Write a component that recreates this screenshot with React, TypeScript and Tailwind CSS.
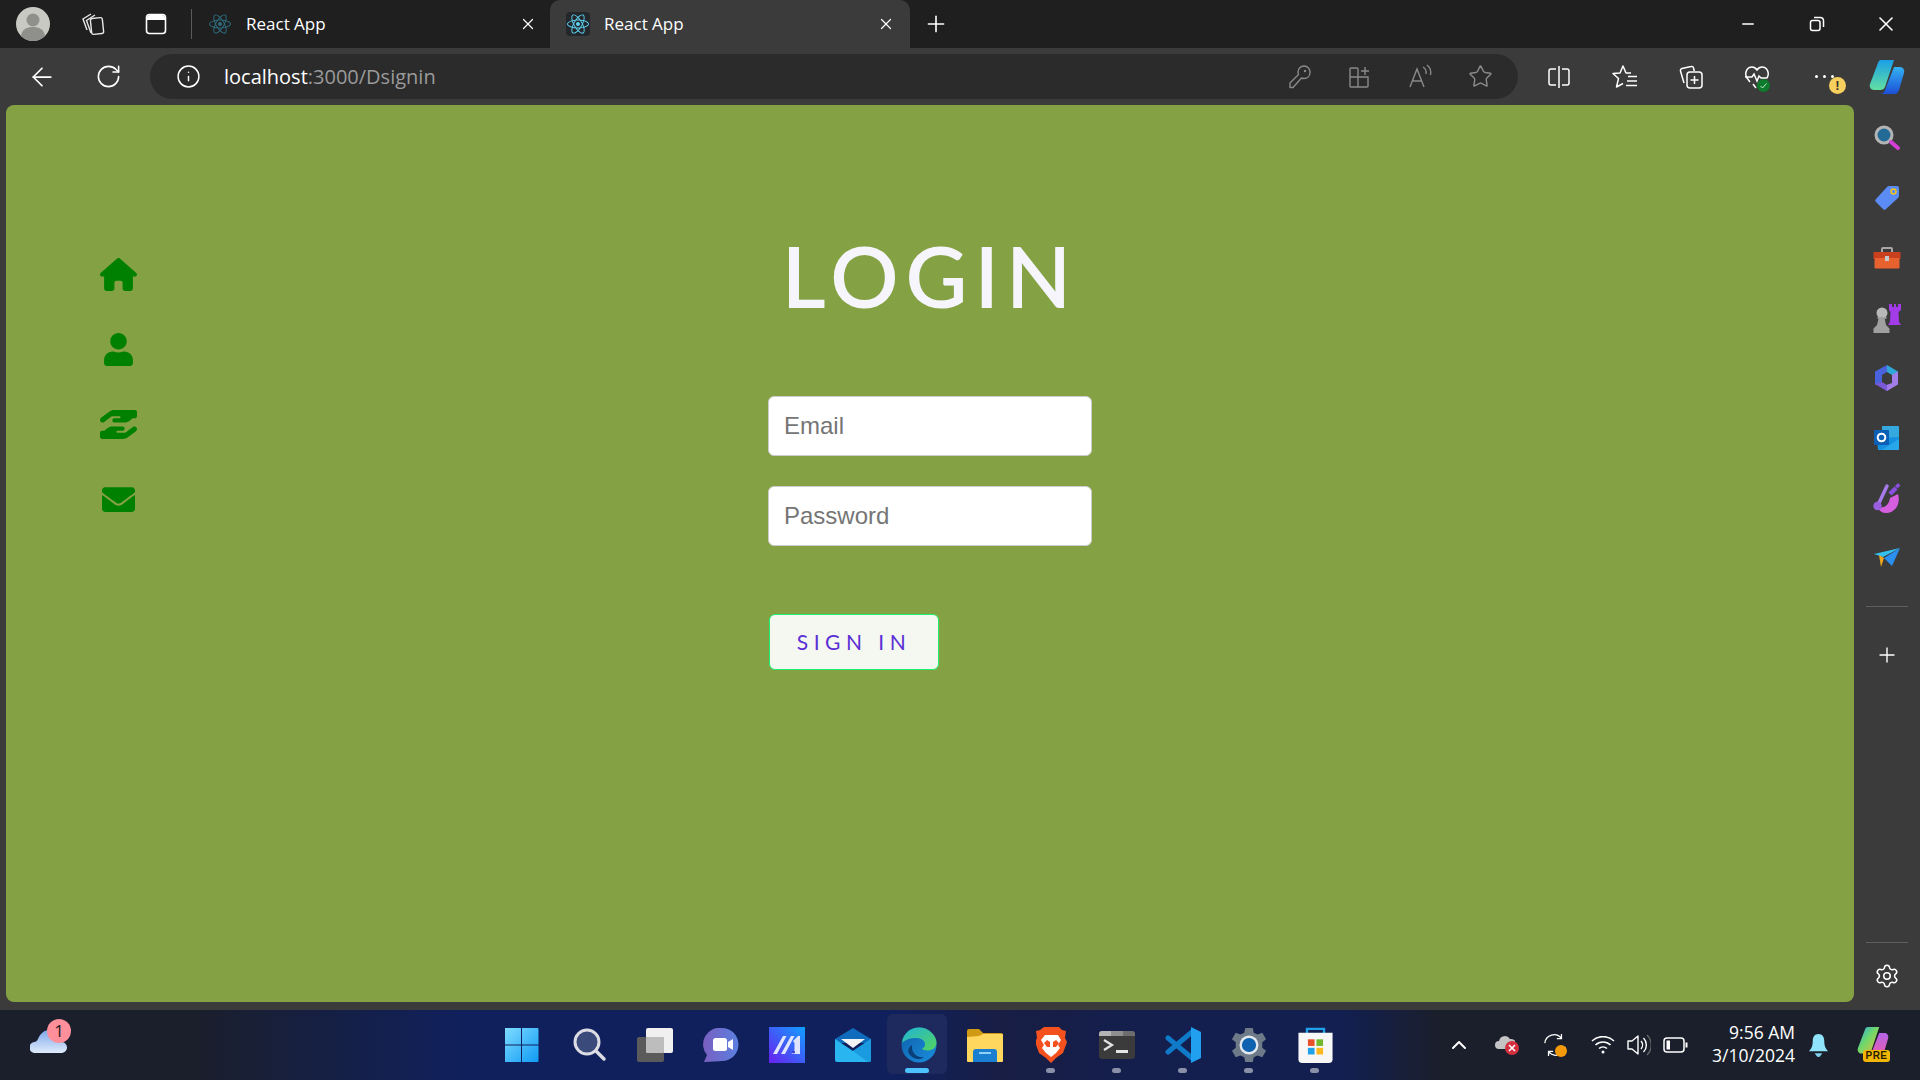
import React from "react";
import { ArrowLeft, RotateCw, Info, Star, Plus, X, Minus, Settings, ChevronUp } from "lucide-react";
import { FaReact, FaUser, FaEnvelope } from "react-icons/fa";
import { FaHouse, FaHandHoldingHand } from "react-icons/fa6";

const Restore = () => (
  <svg width="18" height="18" viewBox="0 0 18 18" fill="none" stroke="#fff" strokeWidth="1.5">
    <rect x="2.5" y="5.5" width="9.5" height="10" rx="2" />
    <path d="M6 2.5h6.5a3 3 0 0 1 3 3V12" />
  </svg>
);
const Collections = () => (
  <svg width="26" height="26" viewBox="0 0 26 26" fill="none" stroke="#e8e8e8" strokeWidth="1.4">
    <rect x="11" y="7" width="12" height="16" rx="2" transform="rotate(-6 17 15)" />
    <path d="M11 22 6.5 9.5 15 4M7 19 3 8l8-5" />
  </svg>
);
const TabsIcon = () => (
  <svg width="24" height="24" viewBox="0 0 24 24">
    <rect x="2.5" y="2.5" width="19" height="19" rx="3" fill="none" stroke="#fff" strokeWidth="1.6" />
    <path d="M3 6a3 3 0 0 1 3-3h12a3 3 0 0 1 3 3v2H3z" fill="#fff" />
  </svg>
);
const KeyIcon = () => (
  <svg width="24" height="26" viewBox="0 0 24 26" fill="none" stroke="#8a8a8a" strokeWidth="1.4">
    <path d="M16 2a6 6 0 0 1 6 6.500c0 3.500-2.500 6-6 6-1 0-1.800-.2-2.500-.5L5 23.500H2V19l8.500-8.500c-.3-.8-.5-1.600-.5-2.500A6 6 0 0 1 16 2z" strokeLinejoin="round" />
    <circle cx="17" cy="7" r="1.200" fill="#8a8a8a" stroke="none" />
  </svg>
);
const Apps = () => (
  <svg width="24" height="26" viewBox="0 0 24 26" fill="none" stroke="#8a8a8a" strokeWidth="1.4">
    <path d="M2 5a1 1 0 0 1 1-1h6a1 1 0 0 1 1 1v8H2zM2 13h8v10H3a1 1 0 0 1-1-1zM10 13h10v9a1 1 0 0 1-1 1h-9z" />
    <path d="M17 3v8M13 7h8" />
  </svg>
);
const ReadAloud = () => (
  <svg width="26" height="26" viewBox="0 0 26 26" fill="none" stroke="#8a8a8a" strokeWidth="1.4">
    <path d="M3 23 10 5l7 18M5.5 17h9" />
    <path d="M16 3c2.5 1.500 3.500 4 3 7M20 1c3 2.500 4.500 6 3.500 10" />
  </svg>
);
const Split = () => (
  <svg width="24" height="26" viewBox="0 0 24 26" fill="none" stroke="#fff" strokeWidth="1.5">
    <path d="M9 5H4a2 2 0 0 0-2 2v12a2 2 0 0 0 2 2h5M15 5h5a2 2 0 0 1 2 2v12a2 2 0 0 1-2 2h-5M12 2v22" />
  </svg>
);
const Favs = () => (
  <svg width="26" height="26" viewBox="0 0 26 26" fill="none" stroke="#fff" strokeWidth="1.5">
    <path d="M19 9h-5l-3-7-3 7-7 .5 5.500 5L4.500 23l6.500-3.500" strokeLinejoin="round" />
    <path d="M16 12.500h9M15 17h10M14 21.500h11" />
  </svg>
);
const CollectionsPlus = () => (
  <svg width="26" height="26" viewBox="0 0 26 26" fill="none" stroke="#fff" strokeWidth="1.5">
    <rect x="9" y="8" width="15" height="16" rx="3" />
    <path d="M16.500 12v8M12.500 16h8" />
    <path d="M6 19 2.500 7a2 2 0 0 1 1.500-2.500L13 2.500a2 2 0 0 1 2.500 1.500l.8 3" />
  </svg>
);
const Health = () => (
  <div className="relative w-[26px] h-[26px]">
    <svg width="26" height="26" viewBox="0 0 26 26" fill="none" stroke="#fff" strokeWidth="1.5">
      <path d="M6 18 3 14C0 9 3 3 8 3c2.500 0 4 1.500 5 3 1-1.500 2.500-3 5-3 5 0 8 6 5 11M1 13h7l2-3 3 7 2-5 2 2h6" />
      <path d="m9 20 3 4" />
    </svg>
    <svg width="13" height="13" viewBox="0 0 13 13" className="absolute right-[0px] bottom-[-2px]">
      <circle cx="6.500" cy="6.500" r="6.500" fill="#0e7a2c" />
      <path d="M3.500 7 5.500 9 9.500 4.500" fill="none" stroke="#bfe8c8" strokeWidth="1" />
    </svg>
  </div>
);
const More = () => (
  <div className="relative w-[26px] h-[26px] flex items-center">
    <div className="flex gap-[5px] ml-[5px]">
      <span className="w-[3px] h-[3px] rounded-full bg-white" />
      <span className="w-[3px] h-[3px] rounded-full bg-white" />
      <span className="w-[3px] h-[3px] rounded-full bg-white" />
    </div>
    <span className="absolute left-[19px] top-[13px] w-[17px] h-[17px] rounded-full bg-[#f7cf5f] text-[#33302a] text-[13px] leading-[17px] text-center font-bold font-['Liberation_Sans',sans-serif]">!</span>
  </div>
);
const Copilot = ({ size = 36 }: { size?: number }) => (
  <svg width={size} height={size} viewBox="0 0 36 36">
    <defs>
      <linearGradient id="cpa" x1="0" y1="0" x2="0" y2="1">
        <stop offset="0" stopColor="#1a9fe8" />
        <stop offset="1" stopColor="#62e0a0" />
      </linearGradient>
      <linearGradient id="cpb" x1="0" y1="0" x2="0" y2="1">
        <stop offset="0" stopColor="#33b2f2" />
        <stop offset="1" stopColor="#1c4fd8" />
      </linearGradient>
    </defs>
    <path d="M12 1h13l-9 27c-1 2-2 3-5 3H5c-3 0-5-3-4-6L9 4c.5-2 1.500-3 3-3z" fill="url(#cpa)" />
    <path d="M25 8h6c3 0 5 3 4 6l-5 17c-1 3-3 4-5 4H10c3 0 5-1 6-4z" fill="url(#cpb)" />
  </svg>
);
const CopilotPre = () => (
  <div className="relative w-[36px] h-[36px]">
    <svg width="36" height="32" viewBox="0 0 36 36">
      <defs>
        <linearGradient id="cpc" x1="0" y1="0" x2="1" y2="1">
          <stop offset="0" stopColor="#2aa5ee" />
          <stop offset=".45" stopColor="#6fd86a" />
          <stop offset="1" stopColor="#f0b93a" />
        </linearGradient>
        <linearGradient id="cpd" x1="0" y1="0" x2="0" y2="1">
          <stop offset="0" stopColor="#b265e8" />
          <stop offset="1" stopColor="#f05aa8" />
        </linearGradient>
      </defs>
      <path d="M12 1h13l-9 27c-1 2-2 3-5 3H5c-3 0-5-3-4-6L9 4c.5-2 1.500-3 3-3z" fill="url(#cpc)" />
      <path d="M25 8h6c3 0 5 3 4 6l-5 17c-1 3-3 4-5 4H10c3 0 5-1 6-4z" fill="url(#cpd)" />
    </svg>
    <span className="absolute left-[8px] top-[24px] w-[27px] h-[12px] rounded-[3px] bg-[#f2b705] text-[#2a2000] text-[10px] tracking-[0.5px] leading-[12px] text-center font-bold font-['Liberation_Sans',sans-serif]">PRE</span>
  </div>
);

/* Side rail */
const SMag = () => (
  <svg width="28" height="28" viewBox="0 0 28 28">
    <circle cx="11" cy="11" r="8" fill="#246a96" stroke="#b4b4b4" strokeWidth="3" />
    <path d="M18 18l7 6" stroke="#d63ed8" strokeWidth="4" strokeLinecap="round" />
  </svg>
);
const STag = () => (
  <svg width="26" height="26" viewBox="0 0 26 26">
    <path d="M15 1h8a2 2 0 0 1 2 2v8a3 3 0 0 1-1 2L12 24a2 2 0 0 1-3 0l-7-7a2 2 0 0 1 0-3L13 2a3 3 0 0 1 2-1z" fill="#5b8cf5" />
    <circle cx="19.500" cy="6.500" r="2.500" fill="none" stroke="#f5c518" strokeWidth="1.500" />
  </svg>
);
const SBox = () => (
  <svg width="28" height="22" viewBox="0 0 28 22">
    <path d="M9 5V2a1 1 0 0 1 1-1h8a1 1 0 0 1 1 1v3" fill="none" stroke="#a8a8a8" strokeWidth="2" />
    <rect x="0.500" y="5" width="27" height="7" fill="#c9401f" />
    <rect x="1.500" y="11" width="25" height="10.500" rx="1" fill="#e8622f" />
    <rect x="12" y="9" width="4" height="5" fill="#c8c8c8" />
  </svg>
);
const SChess = () => (
  <svg width="28" height="29" viewBox="0 0 28 29">
    <path d="M16 0h3v3h2V0h2v3h2V0h3v6l-2.500 2 .5 10 2 3H15l2-3 .5-10L16 6z" fill="#a33ce8" />
    <circle cx="9" cy="9" r="5.500" fill="#b8b8b8" />
    <path d="M4.500 13h9v1.800h-1.800L13 21l3.500 3.500V29H.5v-4.500L4 21l1.500-6.200h-1z" fill="#a0a0a0" />
  </svg>
);
const SHex = () => (
  <svg width="26" height="26" viewBox="0 0 26 26">
    <path d="M13 0 24 6.500V14l-6-4-5-3z" fill="#2fa8d8" />
    <path d="M1 6.500 13 0v7L8 10v7l-7 3z" fill="#4a62dc" />
    <path d="M24 6.500V19.500L13 26l-6-4 11-4v-8z" fill="#a27ce8" />
    <path d="M1 19l7-2 5 3v6z" fill="#7b58d8" />
    <path d="M8.500 10 13 7.500l4.500 2.500v6L13 18.500 8.500 16z" fill="#3b3b3b" />
  </svg>
);
const SOutlook = () => (
  <svg width="26" height="26" viewBox="0 0 26 26">
    <rect x="8" y="1" width="17" height="14" rx="1" fill="#35a8e0" />
    <path d="M3 13l22-1v12a1 1 0 0 1-1 1H4z" fill="#1490df" />
    <path d="M8 25l17-11v10a1 1 0 0 1-1 1z" fill="#28a8ea" />
    <rect x="0" y="5" width="15" height="15" rx="1" fill="#0d5fb5" />
    <circle cx="7.500" cy="12.500" r="3.800" fill="none" stroke="#fff" strokeWidth="2" />
  </svg>
);
const SWand = () => (
  <svg width="28" height="30" viewBox="0 0 28 30">
    <path d="M5 24c6 2 11-2 12-9l8-4c3 10-3 19-12 19-4 0-7-2-8-6z" fill="#d65fe0" />
    <path d="M5 22 14 3" stroke="#a77bea" strokeWidth="3.500" strokeLinecap="round" />
    <circle cx="4.500" cy="23" r="4.200" fill="#9a5fe0" />
    <path d="M17 11l6-6" stroke="#8a4fe0" strokeWidth="4.500" />
    <path d="M25 0l2.500 2.500-3 3-2.500-2.500z" fill="#8a4fe0" />
  </svg>
);
const SPlane = () => (
  <svg width="28" height="22" viewBox="0 0 28 22">
    <path d="M1 7 27 1 10 10z" fill="#35c0f0" />
    <path d="M27 1 19 19 11 11z" fill="#2a8ff0" />
    <path d="M6 8l5 3-3 9z" fill="#f2a81d" />
  </svg>
);

/* Taskbar */
const TWin = () => (
  <svg width="36" height="36" viewBox="1.500 0 36 36">
    <defs>
      <linearGradient id="wn" x1="0" y1="0" x2="1" y2="1">
        <stop offset="0" stopColor="#7fdcff" />
        <stop offset="1" stopColor="#0f9af5" />
      </linearGradient>
    </defs>
    <path d="M1 2a1 1 0 0 1 1-1h15.500v16.500H1zM18.500 1H34a1 1 0 0 1 1 1v15.500H18.500zM1 18.500h16.500V35H2a1 1 0 0 1-1-1zM18.500 18.500H35V34a1 1 0 0 1-1 1H18.500z" fill="url(#wn)" />
  </svg>
);
const TSearch = () => (
  <svg width="36" height="36" viewBox="0 0 36 36">
    <circle cx="16" cy="15" r="12" fill="#3a4a7a" stroke="#dcdce4" strokeWidth="3" />
    <path d="M25 24l8 8" stroke="#dcdce4" strokeWidth="3.500" strokeLinecap="round" />
  </svg>
);
const TView = () => (
  <svg width="36" height="34" viewBox="0 0 36 34">
    <rect x="9" y="0" width="27" height="25" rx="2" fill="#f0f0f0" />
    <rect x="0" y="9" width="27" height="25" rx="2" fill="#5a5a5a" />
    <rect x="9" y="9" width="18" height="16" rx="1" fill="#bdbdbd" />
  </svg>
);
const TChat = () => (
  <svg width="36" height="34" viewBox="0 0 36 34">
    <defs>
      <linearGradient id="cht" x1="0" y1="0" x2="1" y2="0">
        <stop offset="0" stopColor="#7a5fc0" />
        <stop offset="1" stopColor="#5a80e0" />
      </linearGradient>
    </defs>
    <path d="M19 0a16.500 16.500 0 0 1 0 33c-4 0-10 1-18 1l3-7A16.500 16.500 0 0 1 19 0z" fill="url(#cht)" />
    <rect x="10" y="10" width="14" height="13" rx="2.500" fill="#fff" />
    <path d="M25 14l5-3v11l-5-3z" fill="#fff" />
  </svg>
);
const TM = () => (
  <svg width="36" height="36" viewBox="0 0 36 36">
    <defs>
      <linearGradient id="mg" x1="1" y1="0" x2="0" y2="1">
        <stop offset="0" stopColor="#0fa0ff" />
        <stop offset="1" stopColor="#6a1ff0" />
      </linearGradient>
    </defs>
    <rect width="36" height="36" fill="url(#mg)" />
    <path d="M4 27 14 9h3.500L8 27zM12 27 22 9h3.500L16 27zM24 14l5-5h2v18h-8.500l3-4V16z" fill="#dfe4ff" />
    <circle cx="24.500" cy="25" r="1.600" fill="#3a45d8" />
  </svg>
);
const TMail = () => (
  <svg width="36" height="34" viewBox="0 0 36 34">
    <path d="M0 11 18 0l18 11v4H0z" fill="#0f6cbd" />
    <path d="M6 11h24L18 20z" fill="#f4f4f4" />
    <path d="M0 11l18 12 18-12v21a2 2 0 0 1-2 2H2a2 2 0 0 1-2-2z" fill="#29b6f0" />
    <path d="M18 23 36 11v21a2 2 0 0 1-2 2h-1z" fill="#1a9be0" />
  </svg>
);
const TEdge = () => (
  <svg width="36" height="36" viewBox="0 0 36 36">
    <defs>
      <linearGradient id="eg" x1="0" y1="0" x2="1" y2="1">
        <stop offset="0" stopColor="#1fb5d8" />
        <stop offset="1" stopColor="#53d45e" />
      </linearGradient>
      <linearGradient id="eb" x1="0" y1="0" x2="1" y2="1">
        <stop offset="0" stopColor="#0f5fa8" />
        <stop offset="1" stopColor="#1a8fe0" />
      </linearGradient>
    </defs>
    <circle cx="18" cy="18" r="17.500" fill="url(#eb)" />
    <path d="M1 16C2 6 10 .5 18 .5c10 0 17.500 8 17.500 15 0 5-4 8-9 8-3 0-5-1-5.500-2 4-1 4-7 0-9-6-3-15-1-20.500 3.500z" fill="url(#eg)" />
    <path d="M11 18c-1 8 5 13 12 12-3 3-10 3-14-2-3-3-2-8 2-10z" fill="#0a3f78" />
  </svg>
);
const TFolder = () => (
  <svg width="36" height="33" viewBox="0 0 36 33">
    <path d="M0 2a2 2 0 0 1 2-2h10l4 4h18a2 2 0 0 1 2 2v4H0z" fill="#d09a14" />
    <path d="M0 8l12-1 4-2h20v27a1 1 0 0 1-1 1H1a1 1 0 0 1-1-1z" fill="#ffd75e" />
    <path d="M6 23a3 3 0 0 1 3-3h18a3 3 0 0 1 3 3v10H6z" fill="#1a7fd0" />
    <rect x="12" y="23" width="12" height="2" fill="#8fd0f5" />
  </svg>
);
const TBrave = () => (
  <svg width="31" height="36" viewBox="0 0 31 36">
    <path d="M8 0h15l3 3 4 1-1 7 2 4-4 11-7 5-5 5-5-5-7-5-4-11 2-4-1-7 4-1z" fill="#f4511e" />
    <path d="M9 8h13l3 5-3 5 2 3-4 5-5 4-5-4-4-5 2-3-3-5z" fill="#fff" />
    <path d="M11 13l3 2v5h-3l-3-4zM20 13l-3 2v5h3l3-4z" fill="#f4511e" />
  </svg>
);
const TTerm = () => (
  <svg width="36" height="28" viewBox="0 0 36 28">
    <rect width="36" height="28" rx="3" fill="#3b3b3b" />
    <path d="M0 3a3 3 0 0 1 3-3h9v5H0z" fill="#b4b4b4" />
    <rect x="12" width="12" height="5" fill="#8f8f8f" />
    <path d="M24 0h9a3 3 0 0 1 3 3v2H24z" fill="#6e6e6e" />
    <path d="M5 9l8 5-8 5" fill="none" stroke="#e4e4e4" strokeWidth="2.200" />
    <rect x="17" y="19" width="12" height="3" fill="#e4e4e4" />
  </svg>
);
const TCode = () => (
  <svg width="36" height="36" viewBox="0 0 36 36">
    <path d="M3 25 27 5M3 11l24 20" stroke="#0f7ac8" strokeWidth="5" strokeLinecap="round" />
    <path d="M26 0 36 5v26l-10 5z" fill="#22a0f0" />
  </svg>
);
const TGear = () => (
  <svg width="36" height="36" viewBox="0 0 38 38">
    <path d="M15 1h8l1 5 4 2 5-2 4 7-4 3v6l4 3-4 7-5-2-4 2-1 5h-8l-1-5-4-2-5 2-4-7 4-3v-6l-4-3 4-7 5 2 4-2z" fill="#6f7a88" />
    <circle cx="19" cy="19" r="10" fill="#e4e9ef" />
    <circle cx="19" cy="19" r="7.500" fill="#0f62b0" />
  </svg>
);
const TStore = () => (
  <svg width="35" height="36" viewBox="0 0 36 38">
    <path d="M9 7V2h18v5" fill="none" stroke="#21a0e8" strokeWidth="2.500" />
    <path d="M0 6h36v28a4 4 0 0 1-4 4H4a4 4 0 0 1-4-4z" fill="#f7f7f7" />
    <rect x="10" y="13" width="7" height="7" fill="#e8502a" />
    <rect x="19" y="13" width="7" height="7" fill="#72b82b" />
    <rect x="10" y="22" width="7" height="7" fill="#1fa0e8" />
    <rect x="19" y="22" width="7" height="7" fill="#fbb81c" />
  </svg>
);
const Cloud = () => (
  <div className="relative w-[37px] h-[23px] mb-[7px]">
    <svg width="37" height="23" viewBox="0 0 37 23">
      <defs>
        <linearGradient id="cl" x1="0" y1="0" x2="0" y2="1">
          <stop offset="0" stopColor="#7da8ea" />
          <stop offset="1" stopColor="#e0ebfb" />
        </linearGradient>
      </defs>
      <path d="M6 23a5.500 5.500 0 0 1-2-11c2 0 3-1 4-3 2-5 6-9 11-9 3 0 8 6 9 12h3a5.500 5.500 0 0 1 1 11z" fill="url(#cl)" />
    </svg>
    <span className="absolute left-[17px] top-[-11px] w-[24px] h-[24px] rounded-full bg-[#ff8f9b] text-[#1c1c1c] text-[17px] leading-[24px] text-center font-['Open_Sans',sans-serif]">1</span>
  </div>
);
const TrayCloud = () => (
  <div className="relative w-[24px] h-[20px]">
    <svg width="20" height="14" viewBox="0 0 20 14" className="mt-[0px]">
      <path d="M4 14a4 4 0 0 1 0-8 6 6 0 0 1 11-2 4.500 4.500 0 0 1 2 10z" fill="#c4c4c4" />
    </svg>
    <span className="absolute right-0 bottom-0 w-[14px] h-[14px] rounded-full bg-[#d32f3f] flex items-center justify-center">
      <svg width="8" height="8" viewBox="0 0 8 8" stroke="#fff" strokeWidth="1.600"><path d="M1 1l6 6M7 1 1 7" /></svg>
    </span>
  </div>
);
const TraySync = () => (
  <div className="relative w-[24px] h-[24px]">
    <svg width="24" height="24" viewBox="0 0 26 26" fill="none" stroke="#fff" strokeWidth="1.400">
      <path d="M2 11a10 10 0 0 1 18-5M24 15a10 10 0 0 1-18 5M20 1v5h-5M6 25v-5h5" />
    </svg>
    <span className="absolute right-[0px] bottom-[0px] w-[12px] h-[12px] rounded-full bg-[#f59a0b]" />
  </div>
);
const Wifi = () => (
  <svg width="24" height="18" viewBox="0 0 24 18" fill="none" stroke="#fff" strokeWidth="1.600">
    <path d="M1 5a16 16 0 0 1 22 0M4.500 9a11 11 0 0 1 15 0M8 12.500a6 6 0 0 1 8 0" />
    <circle cx="12" cy="16" r="1.500" fill="#fff" stroke="none" />
  </svg>
);
const Vol = () => (
  <svg width="24" height="22" viewBox="0 0 24 22" fill="none" stroke="#fff" strokeWidth="1.400">
    <path d="M1 7h4l6-5v18l-6-5H1z" strokeLinejoin="round" />
    <path d="M14 7a6 6 0 0 1 0 8M16.500 4a10 10 0 0 1 0 14" />
    <path d="M20 1a14 14 0 0 1 0 20" stroke="#666" />
  </svg>
);
const Battery = () => (
  <svg width="25" height="16" viewBox="0 0 25 16" fill="none" stroke="#fff" strokeWidth="1.500">
    <rect x="1" y="1" width="20" height="14" rx="3" />
    <rect x="3.500" y="3.500" width="3.500" height="9" fill="#fff" stroke="none" />
    <path d="M23.500 5.500v5" strokeWidth="2" />
  </svg>
);
const Bell = () => (
  <svg width="21" height="25" viewBox="0 0 22 26">
    <path d="M11 1c4 0 6 3 6 7 0 5 1 8 4 11H1c3-3 4-6 4-11 0-4 2-7 6-7z" fill="#8fe4fb" />
    <path d="M7 21h8l-2 3a2.500 2.500 0 0 1-4 0z" fill="#7fd0ee" />
  </svg>
);

const Slot = ({ w, children }: { w: string; children: React.ReactNode }) => (
  <div className={`${w} h-full shrink-0 flex items-center justify-center`}>{children}</div>
);

const taskIcons: { el: React.ReactNode; dot?: boolean; active?: boolean }[] = [
  { el: <TWin /> },
  { el: <TSearch /> },
  { el: <TView /> },
  { el: <TChat /> },
  { el: <TM /> },
  { el: <TMail /> },
  { el: <TEdge />, active: true },
  { el: <TFolder /> },
  { el: <TBrave />, dot: true },
  { el: <TTerm />, dot: true },
  { el: <TCode />, dot: true },
  { el: <TGear />, dot: true },
  { el: <TStore />, dot: true },
];

const railIcons = [<SMag />, <STag />, <SBox />, <SChess />, <SHex />, <SOutlook />, <SWand />, <SPlane />];

const inputCls =
  "w-full h-[60px] rounded-[6px] border border-[#ccc] bg-white px-[15px] text-[24px] font-['Liberation_Sans',sans-serif] placeholder:text-[#757575] outline-none";

export default function App() {
  return (
    <div className="w-[1920px] h-[1080px] flex flex-col overflow-hidden bg-[#3b3b3b] font-['Open_Sans',sans-serif]">
      {/* Tab strip */}
      <div className="h-[48px] shrink-0 flex items-stretch bg-[#1f1f1f] text-white">
        <div className="w-[60px] shrink-0 flex items-center justify-center pl-[6px]">
          <svg width="34" height="34" viewBox="0 0 34 34">
            <circle cx="17" cy="17" r="17" fill="#c9c9c4" />
            <circle cx="17" cy="13" r="6.500" fill="#8f8f8c" />
            <path d="M5 29c1-7 6-9 12-9s11 2 12 9a17 17 0 0 1-24 0z" fill="#8f8f8c" />
          </svg>
        </div>
        <Slot w="w-[66px]"><Collections /></Slot>
        <Slot w="w-[60px]"><TabsIcon /></Slot>
        <div className="w-[1px] h-[30px] self-center bg-[#5a5a5a] ml-[5px]" />
        <div className="w-[358px] shrink-0 flex items-center pl-[17px] pr-[13px]">
          <FaReact className="text-[22px] text-[#2f6f80]" />
          <span className="ml-[15px] text-[17px]">React App</span>
          <X className="ml-auto" size={18} strokeWidth={1.6} />
        </div>
        <div className="w-[360px] shrink-0 flex items-center rounded-t-[10px] bg-[#3b3b3b] pl-[16px] pr-[15px]">
          <div className="w-[24px] h-[24px] rounded-[4px] bg-[#23272b] flex items-center justify-center">
            <FaReact className="text-[22px] text-[#5ed3f3]" />
          </div>
          <span className="ml-[14px] text-[17px]">React App</span>
          <X className="ml-auto" size={18} strokeWidth={1.6} />
        </div>
        <div className="w-[52px] shrink-0 flex items-center justify-center">
          <Plus size={26} strokeWidth={1.5} />
        </div>
        <div className="ml-auto flex">
          <Slot w="w-[69px]"><Minus size={18} strokeWidth={2} /></Slot>
          <Slot w="w-[69px]"><Restore /></Slot>
          <Slot w="w-[69px]"><X size={24} strokeWidth={1.6} /></Slot>
        </div>
      </div>

      {/* Toolbar */}
      <div className="h-[57px] shrink-0 flex items-stretch text-white pl-[15px]">
        <Slot w="w-[54px]"><ArrowLeft size={30} strokeWidth={1.4} /></Slot>
        <Slot w="w-[78px]"><RotateCw size={27} strokeWidth={1.4} /></Slot>
        <div className="w-[1368px] h-[45px] mt-[6px] ml-[3px] shrink-0 rounded-[23px] bg-[#2b2b2b] flex items-center pl-[26px] pr-[8px]">
          <Info size={25} strokeWidth={1.4} />
          <span className="ml-[23px] text-[20px] text-white">localhost<span className="text-[#9a9a9a]">:3000/Dsignin</span></span>
          <div className="ml-auto flex h-full">
            <Slot w="w-[60px]"><KeyIcon /></Slot>
            <Slot w="w-[60px]"><Apps /></Slot>
            <Slot w="w-[60px]"><ReadAloud /></Slot>
            <Slot w="w-[60px]"><Star size={25} strokeWidth={1.4} color="#8a8a8a" /></Slot>
          </div>
        </div>
        <div className="ml-[8px] flex">
          <Slot w="w-[66px]"><Split /></Slot>
          <Slot w="w-[66px]"><Favs /></Slot>
          <Slot w="w-[66px]"><CollectionsPlus /></Slot>
          <Slot w="w-[66px]"><Health /></Slot>
          <Slot w="w-[66px]"><More /></Slot>
          <Slot w="w-[62px]"><Copilot /></Slot>
        </div>
      </div>

      {/* Body */}
      <div className="h-[905px] shrink-0 flex">
        <div className="ml-[6px] w-[1848px] h-[897px] shrink-0 rounded-[8px] bg-[#84a144] grid grid-cols-[1fr_324px_1fr]">
          <div className="pl-[94px] pt-[153px] flex flex-col gap-[42px] text-[33px] text-[#008000]">
            <div className="w-[37px] h-[33px] flex items-center justify-center text-[37px]"><FaHouse /></div>
            <div className="w-[37px] h-[33px] flex items-center justify-center"><FaUser /></div>
            <div className="w-[37px] h-[33px] flex items-center justify-center text-[37px]"><FaHandHoldingHand /></div>
            <div className="w-[37px] h-[33px] flex items-center justify-center"><FaEnvelope /></div>
          </div>
          <div className="pt-[126px] flex flex-col">
            <div className="h-[88px] leading-[88px] text-center text-[85px] font-semibold tracking-[7px] text-[#f5f5fb] font-['Lato',sans-serif]">LOGIN</div>
            <input className={`${inputCls} mt-[77px]`} placeholder="Email" />
            <input className={`${inputCls} mt-[30px]`} placeholder="Password" />
            <button className="mt-[68px] ml-[1px] w-[170px] h-[56px] rounded-[6px] border border-[#1eef70] bg-[#f4f8f0] text-[#5b2fd6] text-[21px] tracking-[5.500px] font-['Lato',sans-serif]">SIGN IN</button>
          </div>
          <div />
        </div>
        <div className="w-[66px] shrink-0 flex flex-col items-center pt-[3px] text-white">
          {railIcons.map((ic, i) => (
            <div key={i} className="h-[60px] w-full flex items-center justify-center">{ic}</div>
          ))}
          <div className="w-[42px] h-[1px] bg-[#5f5f5f] mt-[18px]" />
          <div className="mt-[33px] h-[30px] flex items-center"><Plus size={24} strokeWidth={1.4} /></div>
          <div className="w-[42px] h-[1px] bg-[#5f5f5f] mt-auto" />
          <div className="mt-[16px] mb-[17px] h-[34px] flex items-center"><Settings size={26} strokeWidth={1.4} /></div>
        </div>
      </div>

      {/* Taskbar */}
      <div className="h-[70px] shrink-0 flex items-stretch bg-[linear-gradient(90deg,#1b1f2b_0%,#1b1f2b_10%,#10205c_24%,#10205c_47%,#181e44_52%,#141f4e_60%,#121f50_70%,#1b1f2b_75%,#1b1f2b_100%)] text-white">
        <div className="w-[488px] shrink-0 pl-[30px] flex items-center"><Cloud /></div>
        <div className="flex ml-[2px]">
          {taskIcons.map((t, i) => (
            <div key={i} className="relative w-[66px] h-full flex items-center justify-center">
              {t.active && <div className="absolute left-[1px] top-[4px] w-[60px] h-[60px] rounded-[6px] bg-[#1e2a5e]" />}
              <div className="relative flex">{t.el}</div>
              {t.dot && <span className="absolute left-[28px] bottom-[7px] w-[9px] h-[5px] rounded-full bg-[#8a90a8]" />}
              {t.active && <span className="absolute left-[19px] bottom-[7px] w-[24px] h-[5px] rounded-full bg-[#4cc2ff]" />}
            </div>
          ))}
        </div>
        <div className="ml-[91px] flex items-center">
          <div className="w-[40px] flex justify-center"><ChevronUp size={24} strokeWidth={2} /></div>
          <div className="w-[50px] ml-[3px] flex justify-center"><TrayCloud /></div>
          <div className="w-[46px] flex justify-center"><TraySync /></div>
          <div className="w-[36px] ml-[7px] flex justify-center"><Wifi /></div>
          <div className="w-[36px] flex justify-center"><Vol /></div>
          <div className="w-[36px] flex justify-center"><Battery /></div>
          <div className="w-[102px] mb-[3px] text-right text-[17.500px] leading-[23px] text-white">
            <div>9:56 AM</div>
            <div>3/10/2024</div>
          </div>
          <div className="w-[46px] flex justify-center"><Bell /></div>
          <div className="w-[64px] flex justify-center mb-[2px]"><CopilotPre /></div>
        </div>
      </div>
    </div>
  );
}
